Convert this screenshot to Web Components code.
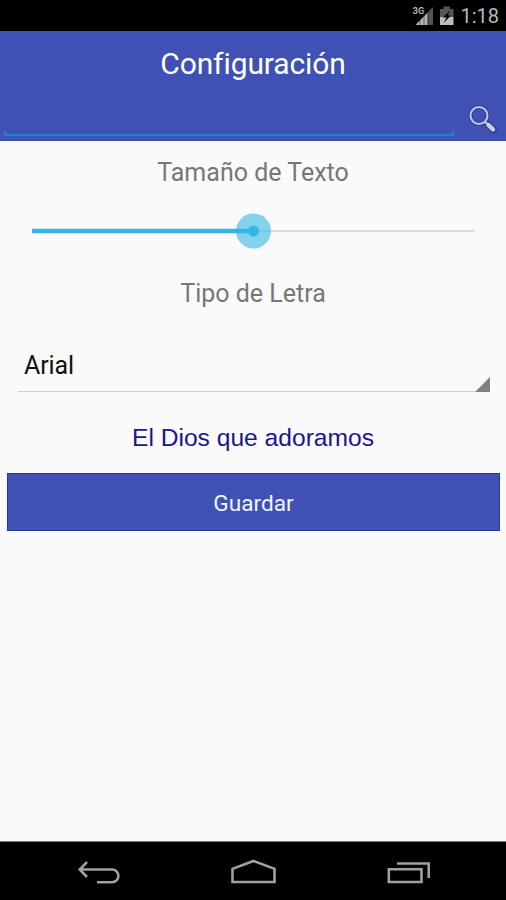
<!DOCTYPE html>
<html lang="es">
<head>
<meta charset="utf-8">
<title>Configuración</title>
<style>
html,body{margin:0;height:100%}
body{background:#fafafa;font-family:Roboto,"Noto Sans",sans-serif;overflow:hidden}
</style>
</head>
<body>
<settings-screen></settings-screen>
<script>
const define = (name, markup) => customElements.define(name, class extends HTMLElement {
  constructor() {
    super();
    this.attachShadow({ mode: 'open' }).innerHTML = markup;
  }
});

define('status-bar', `
<style>
:host{display:flex;height:31px;box-sizing:border-box;background:#000;color:#b9b9b9;align-items:center;justify-content:flex-end;padding:1px 7px 0 0}
svg{display:block;flex:none}
.time{font-size:20px;line-height:24px;margin-left:5px}
</style>
<svg width="44" height="24" viewBox="411 4 44 24">
  <text x="412.5" y="14" font-family="Roboto,sans-serif" font-weight="700" font-size="9.500" textLength="12" lengthAdjust="spacingAndGlyphs" fill="#b0b0b0">3G</text>
  <path d="M433 7V25H415.500Z" fill="#555"/>
  <path d="M427.500 12.700V25H415.500Z" fill="#b5b5b5"/>
  <path d="M424 5V16M420 17V25M424 14V25M428 10V25" stroke="#000" stroke-width=".5"/>
  <path d="M440 9H443.500V6.500H450V9H453.500V17H440Z" fill="#555"/>
  <path d="M440 17H453.500V25H440Z" fill="#bdbdbd"/>
  <path d="M450.500 10L443 17.500H446.500L443.500 23L451 15.500H447.500Z" fill="#000"/>
</svg>
<span class="time"><slot></slot></span>`);

define('app-header', `
<style>
:host{display:flex;flex-direction:column;height:110px;box-sizing:border-box;background:#3f51b5;border-bottom:1px solid #354aa9;color:#fff}
.title{height:66px;line-height:66px;text-align:center;font-size:30px;letter-spacing:-.1px}
.search{display:flex;flex:1;align-items:flex-end;padding:0 9px 4px 4px}
.field{flex:none;width:450px;height:5px;box-sizing:border-box;border:solid #1e86c8;border-width:0 2px 2px}
svg{display:block;margin-left:auto;margin-bottom:2px}
</style>
<div class="title"><slot></slot></div>
<div class="search">
  <div class="field"></div>
  <svg width="30" height="30" viewBox="467 103 30 30" fill="none">
    <path d="M487 122.500L493.500 129" stroke="#2b3c91" stroke-width="6.500" stroke-linecap="round"/>
    <circle cx="479" cy="114.500" r="8.500" stroke="#303f98" stroke-width="4"/>
    <circle cx="479" cy="114.500" r="8.500" stroke="#c1c8e8" stroke-width="2"/>
    <path d="M485 120.500L488 124" stroke="#c1c8e8" stroke-width="2"/>
    <path d="M488.500 124L493 128.500" stroke="#cbd0e8" stroke-width="4.400" stroke-linecap="round"/>
  </svg>
</div>`);

define('section-label', `
<style>:host{display:block;text-align:center;font-size:25px;line-height:36px;color:#777}</style>
<slot></slot>`);

define('size-slider', `
<style>
:host{display:grid;height:36px;margin:0 31px 0 32px;align-items:center}
.track,svg{grid-area:1/1}
.track{height:2px;background:#dcdcdc}
svg{display:block}
</style>
<div class="track"></div>
<svg width="443" height="36">
  <path d="M0 18H222" stroke="#33b5e5" stroke-width="4.400"/>
  <circle cx="221.500" cy="18" r="17.500" fill="#33b5e5" opacity=".6"/>
  <circle cx="221.500" cy="18" r="5.500" fill="#33b5e5"/>
</svg>`);

define('font-spinner', `
<style>
:host{display:flex;height:52px;box-sizing:border-box;margin:0 16px 0 18px;padding-left:6px;border-bottom:1px solid #cfcfcf;justify-content:space-between;color:#111;font-size:25px;line-height:51px;letter-spacing:-.1px}
svg{display:block;align-self:flex-end;margin-bottom:-1px}
</style>
<span><slot></slot></span>
<svg width="15" height="15"><path d="M15 0V15H0Z" fill="#808080"/></svg>`);

define('text-preview', `
<style>:host{display:block;text-align:center;font:24.6px/36px "Liberation Sans",Arial,sans-serif;color:#1a1690}</style>
<slot></slot>`);

define('save-button', `
<style>
:host{display:block;margin:0 6px 0 7px}
button{display:block;width:100%;height:58px;box-sizing:border-box;margin:0;padding:3px 0 0;border:1px solid #2036a0;border-radius:0;background:#3f51b5;color:#f2f4ff;font:22.6px/53px Roboto,sans-serif}
</style>
<button type="button"><slot></slot></button>`);

define('nav-bar', `
<style>
:host{display:flex;height:59px;box-sizing:border-box;border-top:1px solid #777;background:#000;justify-content:space-between;align-items:center;padding:2px 74px 0 77px}
svg{display:block;fill:none;stroke:#a0a0a0;stroke-width:2.600}
</style>
<svg width="44" height="28" viewBox="77 858 44 28"><path d="M80 869.500H112A6.300 6.300 0 0 1 112 882.300H97M87 862L79.700 869.500L87 877"/></svg>
<svg width="48" height="28" viewBox="230 858 48 28"><path d="M232.500 882V868.800L253.500 861L274.500 868.800V882Z"/></svg>
<svg width="46" height="28" viewBox="387 858 46 28"><path d="M389.800 869.300H422.500V882H389.800ZM398 863.500H429.700V878"/></svg>`);

define('settings-screen', `
<style>
:host{display:flex;flex-direction:column;height:100vh;background:#fafafa}
main{display:flex;flex-direction:column;flex:1;padding-top:14px}
size-slider{margin-top:22px}
.type{margin-top:27px}
font-spinner{margin-top:28px}
text-preview{margin-top:28px}
save-button{margin-top:17px}
</style>
<status-bar>1:18</status-bar>
<app-header>Configuración</app-header>
<main>
  <section-label>Tamaño de Texto</section-label>
  <size-slider></size-slider>
  <section-label class="type">Tipo de Letra</section-label>
  <font-spinner>Arial</font-spinner>
  <text-preview>El Dios que adoramos</text-preview>
  <save-button>Guardar</save-button>
</main>
<nav-bar></nav-bar>`);
</script>
</body>
</html>
